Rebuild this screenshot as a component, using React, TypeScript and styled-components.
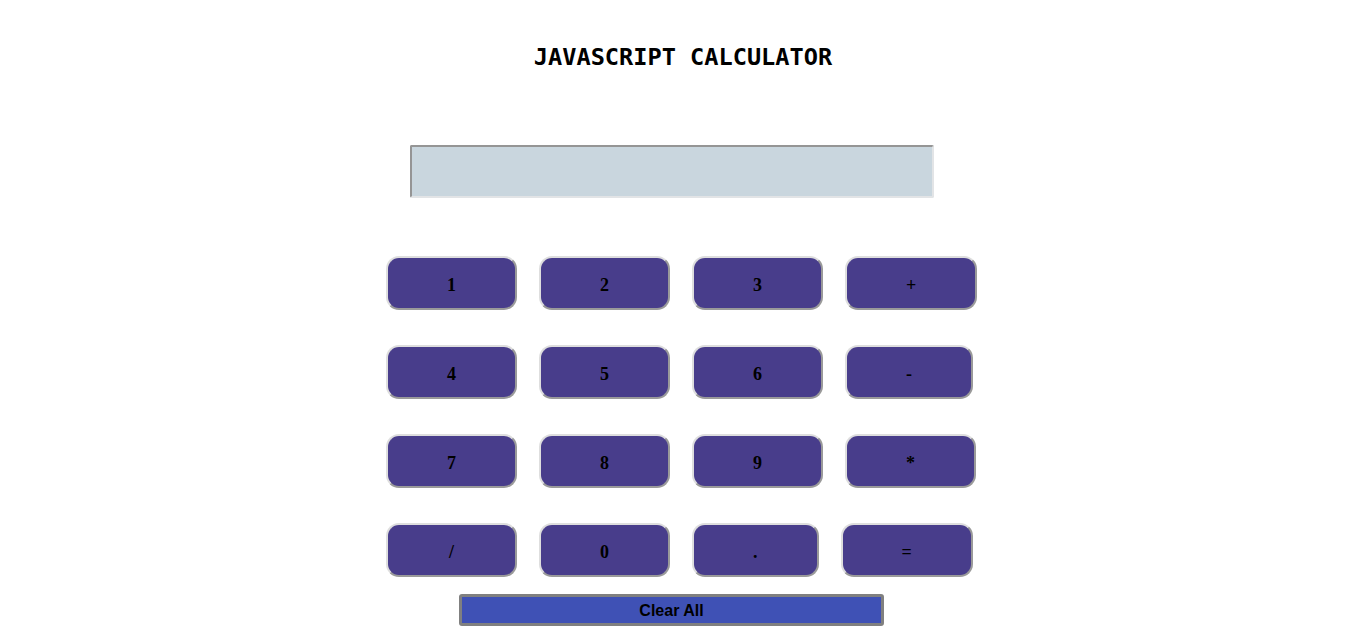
import React, { useState } from "react";
import styled, { createGlobalStyle } from "styled-components";

const GlobalStyle = createGlobalStyle`
  body {
    margin: 0;
    background: #ffffff;
  }
`;

const Page = styled.div`
  display: flex;
  flex-direction: column;
  align-items: center;
  padding-top: 43px;
`;

const Title = styled.h1`
  margin: 0;
  font-family: "DejaVu Sans Mono", "Liberation Mono", monospace;
  font-size: 23.6px;
  line-height: 28px;
  font-weight: 700;
  color: #000;
`;

const Body = styled.div`
  width: 594px;
  display: flex;
  flex-direction: column;
  align-items: flex-start;
`;

const Display = styled.input`
  box-sizing: border-box;
  width: 524px;
  height: 53px;
  margin: 74px 0 0 24px;
  padding: 0 10px;
  background: #c9d6de;
  border-top: 2px solid #959595;
  border-left: 2px solid #959595;
  border-right: 2px solid #e2e4e6;
  border-bottom: 2px solid #e2e4e6;
  border-radius: 2px;
  font-family: "Liberation Sans", Arial, sans-serif;
  font-size: 20px;
  outline: none;
`;

const Keypad = styled.div`
  margin-top: 58px;
  display: flex;
  flex-direction: column;
  gap: 35px;
`;

const Row = styled.div`
  display: flex;
  gap: 22px;
`;

const Key = styled.button<{ $wide?: boolean }>`
  box-sizing: border-box;
  height: 54px;
  padding: 4px ${p => (p.$wide ? 61 : 59)}px 0;
  background: #483d8b;
  border-top: 2px solid #dedede;
  border-left: 2px solid #dedede;
  border-right: 2px solid #9a9a9a;
  border-bottom: 2px solid #9a9a9a;
  border-radius: 13px;
  font-family: "Liberation Serif", "Times New Roman", serif;
  font-size: 18px;
  font-weight: 700;
  color: #000;
  cursor: pointer;
`;

const ClearButton = styled.button`
  box-sizing: border-box;
  width: 425px;
  height: 32px;
  margin: 17px 0 0 73px;
  padding-top: 3px;
  background: #3f51b5;
  border: 3px solid #808080;
  border-radius: 3px;
  font-family: "Liberation Sans", Arial, sans-serif;
  font-size: 16px;
  font-weight: 700;
  color: #000;
  cursor: pointer;
`;

const rows = [
  ["1", "2", "3", "+"],
  ["4", "5", "6", "-"],
  ["7", "8", "9", "*"],
  ["/", "0", ".", "="],
];

export default function App() {
  const [value, setValue] = useState("");

  function press(k: string) {
    if (k === "=") {
      try {
        // eslint-disable-next-line no-new-func
        const result = Function(`"use strict"; return (${value || 0})`)();
        setValue(String(result));
      } catch {
        setValue("Error");
      }
      return;
    }
    setValue(value + k);
  }

  return (
    <>
      <GlobalStyle />
      <Page>
        <Title>JAVASCRIPT CALCULATOR</Title>
        <Body>
          <Display readOnly value={value} />
          <Keypad>
            {rows.map((row, i) => (
              <Row key={i}>
                {row.map(k => (
                  <Key key={k} $wide={k === "/"} onClick={() => press(k)}>{k}</Key>
                ))}
              </Row>
            ))}
          </Keypad>
          <ClearButton onClick={() => setValue("")}>Clear All</ClearButton>
        </Body>
      </Page>
    </>
  );
}
